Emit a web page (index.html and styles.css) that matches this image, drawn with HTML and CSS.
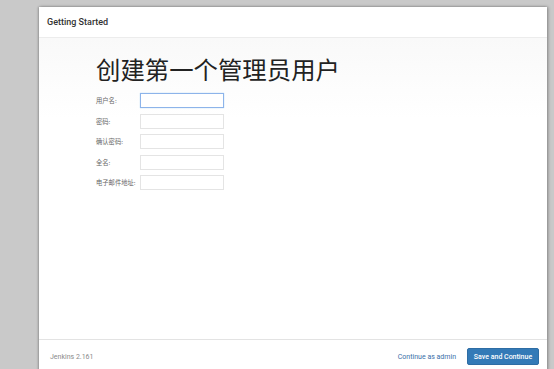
FILE: index.html
```html
<!DOCTYPE html>
<html>
<head>
    <title>Getting Started</title>
    <link rel="stylesheet" href="styles.css">
</head>
<body>
    <div class="dialog">
        <div class="dialog-header">Getting Started</div>

        <div class="dialog-body">
            <h1>创建第一个管理员用户</h1>
            <form class="user-form">
                <label for="username">用户名:</label>
                <input id="username" type="text" class="focused">
                <label for="password1">密码:</label>
                <input id="password1" type="password">
                <label for="password2">确认密码:</label>
                <input id="password2" type="password">
                <label for="fullname">全名:</label>
                <input id="fullname" type="text">
                <label for="email">电子邮件地址:</label>
                <input id="email" type="text">
            </form>
        </div>

        <div class="dialog-footer">
            <span class="version">Jenkins 2.161</span>
            <div class="actions">
                <a href="#" class="skip-link">Continue as admin</a>
                <button class="btn-primary">Save and Continue</button>
            </div>
        </div>
    </div>
</body>
</html>
```

FILE: styles.css
```css
html, body {
    margin: 0;
    height: 100%;
    overflow: hidden;
}
body {
    background: #c9c9c9;
    font-family: Roboto, "Noto Sans CJK SC", sans-serif;
    color: #333;
}
.dialog {
    margin: 7px 0 0 39px;
    width: 508px;
    height: 366px;
    background: #fff;
    display: flex;
    flex-direction: column;
    box-shadow: 1px 0 3px rgba(0,0,0,0.35), -1px 0 2px rgba(0,0,0,0.2);
}
.dialog-header {
    height: 30px;
    line-height: 30px;
    padding-left: 8px;
    font-size: 9px;
    font-weight: 500;
    color: #333;
    border-bottom: 1px solid #ececec;
}
.dialog-body {
    flex: 1;
    padding-left: 57px;
    background: linear-gradient(#f9f9f9, #fff 80px);
    border-bottom: 1px solid #e3e3e3;
}
.dialog-body h1 {
    margin: 15px 0 8px 0;
    font-family: "Noto Sans CJK SC", sans-serif;
    font-size: 24.4px;
    font-weight: 400;
    line-height: 32px;
    color: #222;
}
.user-form {
    display: grid;
    grid-template-columns: 44px 84px;
    row-gap: 5.5px;
    align-items: center;
}
.user-form label {
    font-family: "Noto Sans CJK SC", sans-serif;
    font-size: 6.3px;
    color: #666;
    white-space: nowrap;
}
.user-form input {
    box-sizing: border-box;
    width: 84px;
    height: 15px;
    margin: 0;
    border: 1px solid #e4e4e4;
    background: #fff;
    outline: none;
}
.user-form input.focused {
    border-color: #8db4ea;
    box-shadow: 0 0 1px rgba(102,175,233,0.6);
}
.dialog-footer {
    height: 33px;
    display: flex;
    align-items: center;
    justify-content: space-between;
    padding: 0 8px 0 11px;
}
.version {
    font-size: 7px;
    color: #8a8a8a;
}
.actions {
    display: flex;
    align-items: center;
    gap: 11px;
}
.skip-link {
    font-size: 7px;
    color: #3a6fa8;
    text-decoration: none;
}
.btn-primary {
    height: 17px;
    width: 72px;
    padding: 0;
    border: 1px solid #2e6da4;
    border-radius: 2px;
    background: #337ab7;
    color: #fff;
    font-family: Roboto, sans-serif;
    font-size: 7px;
    font-weight: 500;
}
```
